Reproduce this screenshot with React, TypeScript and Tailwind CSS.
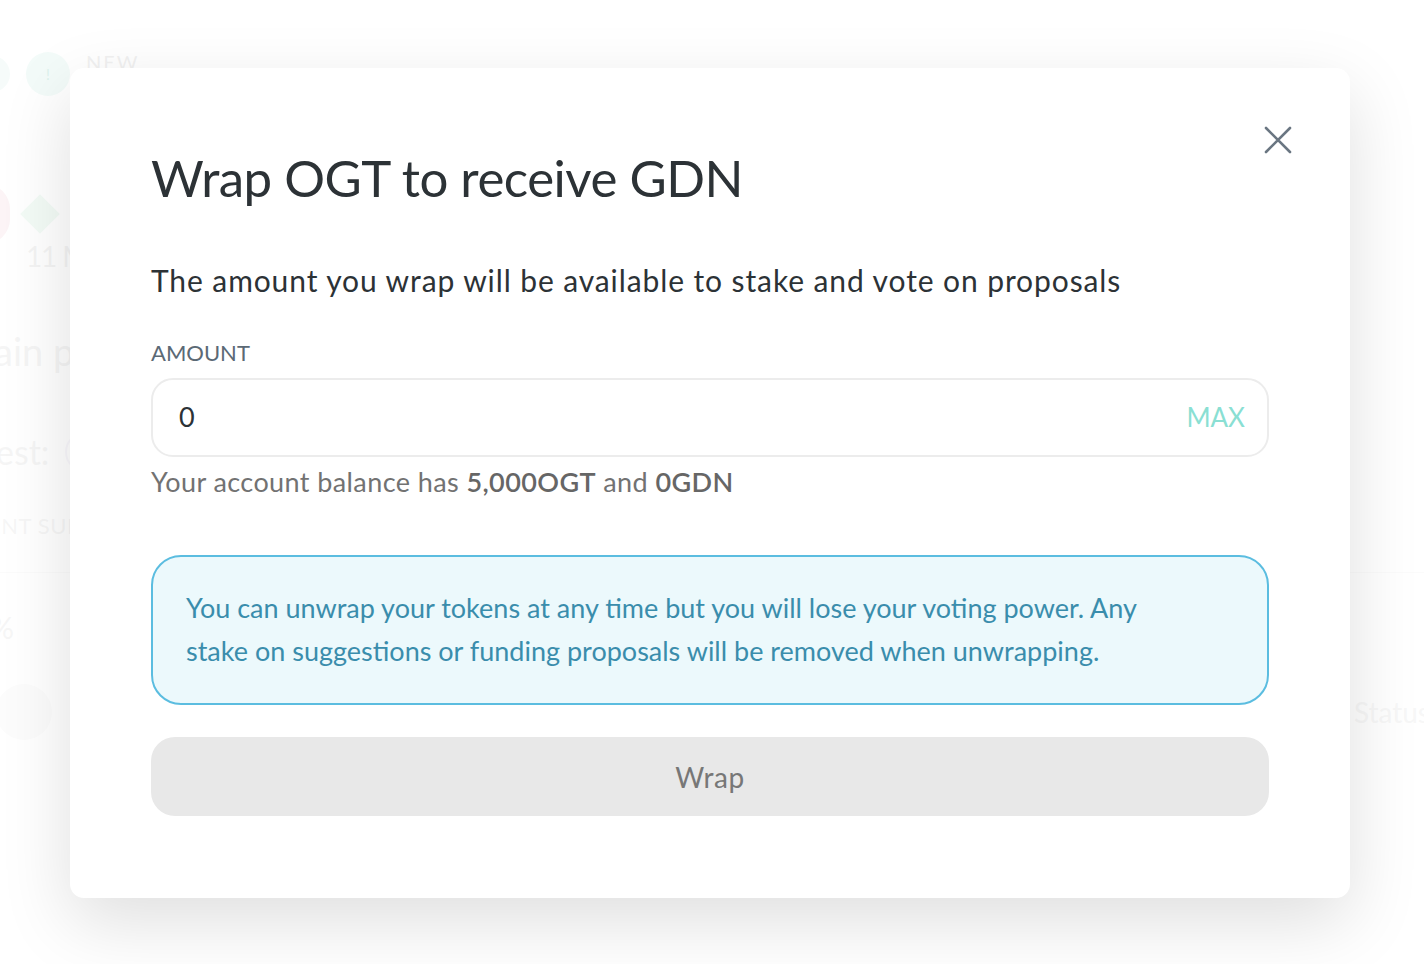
import React from 'react';

const font = { fontFamily: 'Lato, "Noto Sans", sans-serif' };

const Backdrop = () => (
  <div className="h-[964px] w-full overflow-hidden bg-white text-[#333]" style={font}>
    <div className="flex items-center gap-4 pt-[52px] pl-0">
      <div className="-ml-[26px] h-[36px] w-[36px] rounded-full bg-[#dff2ee]" />
      <div className="flex h-[44px] w-[44px] items-center justify-center rounded-full bg-[#d6f1ea] text-[#8fd3c3]">!</div>
      <span className="-mt-[24px] text-[20px] tracking-widest text-[#cfcfcf]">NEW</span>
    </div>
    <div className="mt-[88px] flex items-center gap-4">
      <div className="-ml-[40px] h-[60px] w-[50px] rounded-full bg-[#f3d9df]" />
      <div className="h-[28px] w-[28px] rotate-45 bg-[#d7f0e2]" />
    </div>
    <div className="-mt-[9px] pl-[26px] text-[28px] tracking-[-0.04em] text-[#d9d9d9]">11 M</div>
    <div className="mt-[46px] -ml-[6px] text-[38px] text-[#dcdcdc]">ain p</div>
    <div className="mt-[46px] -ml-[4px] flex items-center gap-4 text-[34px] text-[#dedede]">
      est:
      <div className="h-[40px] w-[40px] rounded-full border-2 border-[#ece6f3]" />
    </div>
    <div className="mt-[32px] -ml-[12px] text-[22px] tracking-wide text-[#dfdfdf]">ENT SUMMARY</div>
    <div className="mt-[30px] h-px w-full bg-[#f1f1f1]" />
    <div className="mt-[32px] -ml-[10px] text-[30px] text-[#e0e0e0]">%</div>
    <div className="mt-[34px] flex items-center justify-between">
      <div className="-ml-[4px] h-[56px] w-[56px] rounded-full bg-[#f4f4f4]" />
      <span className="mr-[-6px] text-[28px] text-[#e3e3e3]">Status</span>
    </div>
  </div>
);

const App: React.FC = () => {
  return (
    <div className="relative h-[964px] w-[1424px] overflow-hidden" style={font}>
      <Backdrop />
      <div className="absolute inset-0 bg-white/70" />
      <div className="absolute left-[70px] top-[68px] flex h-[830px] w-[1280px] flex-col rounded-[14px] bg-white px-[81px] pt-[80px] shadow-[0_24px_70px_rgba(0,0,0,0.13)]">
        <button className="absolute right-[58px] top-[58px] flex h-[28px] w-[28px] items-center justify-center text-[#6a7682]">
          <svg width="28" height="28" viewBox="0 0 28 28" fill="none" stroke="currentColor" strokeWidth="2.6" strokeLinecap="round">
            <path d="M2 2L26 26M26 2L2 26" />
          </svg>
        </button>
        <h1 className="text-[51px] font-normal leading-[60px] tracking-[-0.01em] text-[#2c3236]">Wrap OGT to receive GDN</h1>
        <p className="mt-[54px] text-[30px] leading-[36px] tracking-[0.03em] text-[#2c3236]">
          The amount you wrap will be available to stake and vote on proposals
        </p>
        <label className="mt-[41px] text-[22px] leading-[28px] text-[#5b6975]">AMOUNT</label>
        <div className="mt-[11px] flex h-[79px] items-center justify-between rounded-[22px] border-2 border-[#ececec] pl-[26px] pr-[22px]">
          <span className="text-[27px] text-[#2c3236]">0</span>
          <span className="text-[26px] text-[#8adfd3]">MAX</span>
        </div>
        <p className="mt-[9px] text-[27px] leading-[32px] tracking-[0.015em] text-[#727272]">
          Your account balance has <span className="font-semibold text-[#666]">5,000OGT</span> and <span className="font-semibold text-[#666]">0GDN</span>
        </p>
        <div className="mt-[57px] h-[150px] rounded-[30px] border-2 border-[#5bbde0] bg-[#ecf9fc] pl-[33px] pr-[90px] pt-[29px]">
          <p className="text-[27px] leading-[43px] text-[#3a8dac]">
            You can unwrap your tokens at any time but you will lose your voting power. Any stake on suggestions or funding proposals will be removed when unwrapping.
          </p>
        </div>
        <button className="mt-[32px] flex h-[79px] w-full items-center justify-center rounded-[24px] bg-[#e8e8e8] text-[28px] tracking-[0.02em] text-[#777]">
          Wrap
        </button>
      </div>
    </div>
  );
};

export default App;
